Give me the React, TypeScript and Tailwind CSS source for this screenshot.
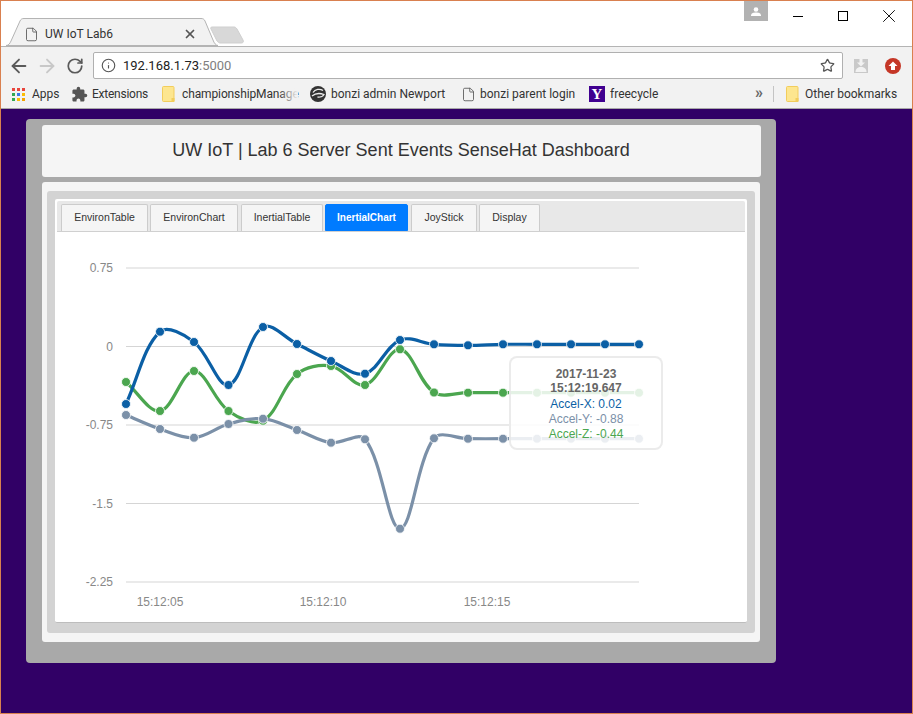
import { ArrowLeft, ArrowRight, File, Info, RotateCw, Star, X } from "lucide-react";
import { MdExtension } from "react-icons/md";

const ui = "font-['Roboto',sans-serif]";
const arial = "font-['Liberation_Sans',Arial,sans-serif]";

const xs = [126, 160, 194, 228.5, 263, 297, 331, 365, 400, 434, 468, 503, 537, 571, 605, 639];

const series = [
  {
    color: "#4ba64f",
    ys: [382, 411, 371, 411, 420.7, 374, 366, 385, 349.3, 392.5, 392.7, 392.7, 392.7, 392.7, 392.7, 392.7],
  },
  {
    color: "#7b90a8",
    ys: [415, 429, 437.7, 424, 418.7, 430, 442.7, 439.3, 528.7, 438.3, 438.7, 438.7, 438.7, 438.7, 438.7, 438.7],
  },
  {
    color: "#0b5fa5",
    ys: [404, 331.7, 342, 385, 327, 344, 361, 373.7, 340, 344.3, 345.3, 344.3, 344.3, 344.3, 344.3, 344.3],
  },
];

const gridLines = [
  { y: 268, label: "0.75" },
  { y: 346.5, label: "0" },
  { y: 425, label: "-0.75" },
  { y: 503.5, label: "-1.5" },
  { y: 582, label: "-2.25" },
];

const tabs = [
  { name: "EnvironTable", width: "w-[87px]" },
  { name: "EnvironChart", width: "w-[88px]" },
  { name: "InertialTable", width: "w-[82px] ml-[1px]" },
  { name: "InertialChart", width: "w-[83px]", active: true },
  { name: "JoyStick", width: "w-[66px] ml-[1px]" },
  { name: "Display", width: "w-[61px]" },
];

// same spline the chart library uses
function splinePath(ys: number[]) {
  const pts = ys.map((y, i) => ({ x: xs[i] - 55, y: y - 232 }));
  const t = 0.35;
  const ctrl = pts.map((p, i) => {
    const a = pts[Math.max(i - 1, 0)];
    const b = pts[Math.min(i + 1, pts.length - 1)];
    const d01 = Math.hypot(p.x - a.x, p.y - a.y);
    const d12 = Math.hypot(b.x - p.x, b.y - p.y);
    const sum = d01 + d12 || 1;
    const fa = (t * d01) / sum;
    const fb = (t * d12) / sum;
    return {
      px: p.x - fa * (b.x - a.x),
      py: p.y - fa * (b.y - a.y),
      nx: p.x + fb * (b.x - a.x),
      ny: p.y + fb * (b.y - a.y),
    };
  });
  let d = `M${pts[0].x} ${pts[0].y}`;
  for (let i = 1; i < pts.length; i++) {
    d += ` C${ctrl[i - 1].nx} ${ctrl[i - 1].ny} ${ctrl[i].px} ${ctrl[i].py} ${pts[i].x} ${pts[i].y}`;
  }
  return d;
}

const AppsIcon = () => {
  const colors = ["#e8453c", "#e8453c", "#e8453c", "#34a853", "#3b78e7", "#fbbc05", "#34a853", "#fbbc05", "#f4a400"];
  return (
    <svg width="13" height="13" viewBox="0 0 13 13">
      {colors.map((c, i) => (
        <rect key={i} x={(i % 3) * 5} y={Math.floor(i / 3) * 5} width="3" height="3" fill={c} />
      ))}
    </svg>
  );
};

const FolderIcon = () => (
  <svg width="13" height="16" viewBox="0 0 13 16">
    <path d="M1.5 .5H11a1 1 0 0 1 1 1V15.5H1.5a1 1 0 0 1-1-1v-13a1 1 0 0 1 1-1z" fill="#fde68f" stroke="#f2cd5c" />
    <rect x="9.5" y="12" width="3" height="3.5" fill="#f2cd5c" />
  </svg>
);

const BonziIcon = () => (
  <svg width="16" height="16" viewBox="0 0 16 16">
    <circle cx="8" cy="8" r="8" fill="#333" />
    <path d="M3 6.500C5 3 10 2.500 13 4.500M2 10c3-2.500 8-3 12-1.500-1 2-4 3-6.500 2.500" fill="none" stroke="#eee" strokeWidth="1.300" />
  </svg>
);

const Mark = ({ children, className }: { children: React.ReactNode; className: string }) => (
  <div className={`flex items-center ${className}`}>{children}</div>
);

export default function App() {
  return (
    <div className="w-[913px] h-[714px] flex flex-col overflow-hidden border border-[#d9804f] bg-[#310066]">
      {/* title bar */}
      <div className={`h-[46px] shrink-0 flex bg-white border-b border-[#b4b4b4] ${ui}`}>
        <div className="relative w-[207px] h-[47px] ml-[5px] mt-[-1px] shrink-0 flex items-center self-end pt-[23px]">
          <svg className="absolute left-0 top-[19px]" width="212" height="28" viewBox="0 0 212 28">
            <path d="M0 27.500C3 27.500 4 25 5 23L14 3C15 1 16 .500 18 .500H195C197 .500 198 1 199 3L207 22C208 25 210 27.500 212 27.500Z" fill="#f2f2f2" stroke="#b4b4b4" />
          </svg>
          <File className="relative ml-[18px] text-[#5a5a5a]" size={15} strokeWidth={1.4} />
          <span className="relative ml-[6px] text-[12px] text-[#333]">UW IoT Lab6</span>
          <X className="relative ml-auto mr-[16px] text-[#555]" size={14} strokeWidth={3} />
        </div>
        <svg className="mt-[25px] ml-[-3px]" width="37" height="18" viewBox="0 0 37 18">
          <path d="M3 1H24C25 1 26 1.500 27 3L33 14C34 16 33 17 31 17H10C9 17 8 16 7 15L1 3C0 1.500 1 1 3 1Z" fill="#d8d8d8" stroke="#cfcfcf" />
        </svg>
        <div className="ml-auto flex items-start h-[22px]">
          <div className="w-[24px] h-[20px] bg-[#b2b2b2] flex items-center justify-center">
            <svg width="10" height="9" viewBox="0 0 10 9">
              <circle cx="5" cy="2.500" r="2.300" fill="#fff" />
              <path d="M0 9c0-3 2-3.500 5-3.500S10 6 10 9z" fill="#fff" />
            </svg>
          </div>
          <div className="w-[144px] h-[30px] flex items-center pl-[25px]">
            <div className="w-[10px] h-[1px] mt-[1px] bg-black" />
            <div className="w-[10px] h-[10px] ml-[35px] border border-black" />
            <X className="ml-[30px] text-black" size={22} strokeWidth={1} />
          </div>
        </div>
      </div>

      {/* toolbar */}
      <div className={`h-[33px] shrink-0 flex items-center pt-[4px] bg-[#f2f2f2] ${ui}`}>
        <ArrowLeft className="ml-[7px] text-[#5a5a5a]" size={22} strokeWidth={2} />
        <ArrowRight className="ml-[6px] text-[#c8c8c8]" size={22} strokeWidth={2} />
        <RotateCw className="ml-[8px] text-[#5a5a5a]" size={18} strokeWidth={2.3} />
        <div className="ml-[9px] w-[750px] h-[27px] flex items-center bg-white border border-[#b0b0b0] rounded-[2px]">
          <Info className="ml-[7px] text-[#555]" size={15} strokeWidth={1.8} />
          <span className="ml-[7px] text-[13px] text-[#222]">
            192.168.1.73<span className="text-[#808080]">:5000</span>
          </span>
          <Star className="ml-auto mr-[7px] text-[#555]" size={15} strokeWidth={2} />
        </div>
        <svg className="ml-[11px]" width="14" height="14" viewBox="0 0 14 14">
          <rect width="14" height="14" fill="#c9c9c9" />
          <path d="M5.500 0h3v3.500H11L7 7.500 3 3.500h2.500z" fill="#f2f2f2" />
          <path d="M1.500 13c0-3.500 2.500-5 5.500-5s5.500 1.500 5.500 5z" fill="#f2f2f2" />
        </svg>
        <svg className="ml-[17px]" width="16" height="16" viewBox="0 0 16 16">
          <circle cx="8" cy="8" r="8" fill="#c53727" />
          <path d="M8 3.500L12.500 8H10v4H6V8H3.500z" fill="#fff" />
        </svg>
      </div>

      {/* bookmarks */}
      <div className={`h-[29px] shrink-0 flex items-center pl-[11px] bg-[#f2f2f2] border-b border-[#a8a8a8] text-[12px] text-[#333] ${ui}`}>
        <Mark className="w-[60px] gap-[7px]">
          <AppsIcon />
          <span>Apps</span>
        </Mark>
        <Mark className="w-[90px] gap-[4px]">
          <MdExtension className="ml-[-1px] text-[#555]" size={17} />
          <span className="tracking-[-0.25px]">Extensions</span>
        </Mark>
        <Mark className="w-[148px] gap-[7px]">
          <FolderIcon />
          <span className="relative w-[116px] whitespace-nowrap tracking-[-0.12px]">
            championshipManage
            <span className="absolute right-0 top-0 bottom-0 w-[20px] bg-gradient-to-r from-transparent to-[#f2f2f2]" />
          </span>
        </Mark>
        <Mark className="w-[151px] gap-[5px]">
          <BonziIcon />
          <span>bonzi admin Newport</span>
        </Mark>
        <Mark className="w-[128px] gap-[4px]">
          <File className="text-[#5a5a5a]" size={15} strokeWidth={1.4} />
          <span>bonzi parent login</span>
        </Mark>
        <Mark className="w-[166px] gap-[5px]">
          <span className="w-[16px] h-[16px] flex items-center justify-center bg-[#400090] text-white text-[15px] font-bold font-['Liberation_Serif',serif]">
            Y
          </span>
          <span>freecycle</span>
        </Mark>
        <span className="w-[18px] text-[16px] font-bold text-[#666] leading-none mt-[-2px]">»</span>
        <div className="w-[1px] h-[16px] bg-[#c4c4c4]" />
        <Mark className="ml-[12px] gap-[6px]">
          <FolderIcon />
          <span>Other bookmarks</span>
        </Mark>
      </div>

      {/* page */}
      <div className={`flex-1 pt-[10px] pl-[25px] ${arial}`}>
        <div className="w-[750px] h-[544px] flex flex-col bg-[#a9a9a9] rounded-[4px] pt-[6px] pl-[16px] pr-[16px]">
          <div className="w-[719px] h-[52px] flex items-center justify-center pb-[2px] pr-[1px] bg-[#f5f5f5] rounded-[3px] text-[18px] text-[#333]">
            UW IoT | Lab 6 Server Sent Events SenseHat Dashboard
          </div>
          <div className="w-[718px] h-[460px] mt-[5px] bg-[#f5f5f5] rounded-[3px] pt-[9px] pl-[5px]">
            <div className="w-[708px] h-[442px] bg-[#d3d3d3] rounded-[3px] pt-[8px] pl-[8px]">
              <div className="w-[692px] h-[424px] bg-white rounded-[2px] border-b border-[#bdbdbd] flex flex-col">
                <div className="h-[31px] mt-[2px] ml-[2px] mr-[2px] shrink-0 flex items-end gap-[2px] pl-[4px] bg-[#e8e8e8] border-b border-[#d0d0d0] rounded-t-[2px]">
                  {tabs.map((tab) => (
                    <div
                      key={tab.name}
                      className={
                        tab.active
                          ? `${tab.width} h-[27px] flex items-center justify-center rounded-t-[2px] bg-[#007bff] border border-[#007bff] text-[10px] font-bold text-white`
                          : `${tab.width} h-[27px] flex items-center justify-center rounded-t-[2px] bg-[#f5f5f5] border border-b-0 border-[#cccccc] text-[10.5px] text-[#333]`
                      }
                    >
                      {tab.name}
                    </div>
                  ))}
                </div>
                <div className="relative flex-1">
                  <svg className="block" width="692" height="390" viewBox="0 0 692 390">
                    {gridLines.map((g) => (
                      <g key={g.y}>
                        <line x1="71" x2="584" y1={g.y - 232} y2={g.y - 232} stroke="#d5d5d5" strokeWidth="1" />
                        <text x="58" y={g.y - 232 + 4} textAnchor="end" fontSize="12" fill="#888">
                          {g.label}
                        </text>
                      </g>
                    ))}
                    {[
                      { x: 105, label: "15:12:05" },
                      { x: 268, label: "15:12:10" },
                      { x: 432, label: "15:12:15" },
                    ].map((t) => (
                      <text key={t.label} x={t.x} y="374" textAnchor="middle" fontSize="12" fill="#888">
                        {t.label}
                      </text>
                    ))}
                    {series.map((s) => (
                      <g key={s.color}>
                        <path d={splinePath(s.ys)} fill="none" stroke={s.color} strokeWidth="3.2" />
                        {s.ys.map((y, i) => (
                          <circle key={i} cx={xs[i] - 55} cy={y - 232} r="4.5" fill={s.color} stroke="#fff" strokeWidth="1" strokeOpacity="0.8" />
                        ))}
                      </g>
                    ))}
                  </svg>
                  {/* tooltip */}
                  <div className="absolute left-[454px] top-[124px] w-[154px] h-[94px] pt-[9px] flex flex-col items-center bg-white/85 border-2 border-[#e6e6e6]/80 rounded-[8px] text-[12px] leading-[14px]">
                    <span className="font-bold text-[#666]">2017-11-23</span>
                    <span className="font-bold text-[#666]">15:12:19.647</span>
                    <span className="mt-[2px] leading-[15px] text-[#0b5fa5]">Accel-X: 0.02</span>
                    <span className="leading-[15px] text-[#7b90a8]">Accel-Y: -0.88</span>
                    <span className="leading-[15px] text-[#4ba64f]">Accel-Z: -0.44</span>
                  </div>
                </div>
              </div>
            </div>
          </div>
        </div>
      </div>
    </div>
  );
}
